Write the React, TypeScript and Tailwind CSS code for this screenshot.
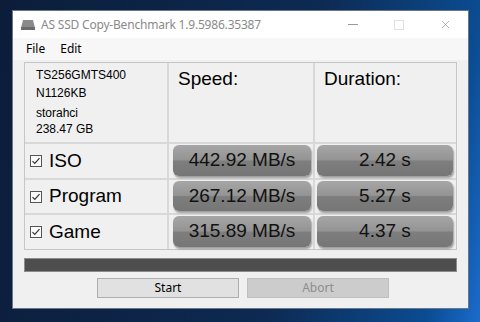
import { X } from 'lucide-react';

const rows = [
  { name: 'ISO', speed: '442.92 MB/s', time: '2.42 s' },
  { name: 'Program', speed: '267.12 MB/s', time: '5.27 s' },
  { name: 'Game', speed: '315.89 MB/s', time: '4.37 s' },
];

function CheckBox() {
  return (
    <svg width="12" height="12" viewBox="0 0 12 12" className="shrink-0">
      <rect x="0.5" y="0.5" width="11" height="11" fill="#fafafa" stroke="#555" />
      <path d="M2.5 6.2 L4.8 8.5 L9.5 3.2" fill="none" stroke="#333" strokeWidth="1.2" />
    </svg>
  );
}

function ValueBox({ children }: { children: React.ReactNode }) {
  return (
    <div className="h-full w-full rounded-[6px] bg-[linear-gradient(to_bottom,#a6a6a6_0%,#949494_48%,#7e7e7e_52%,#767676_100%)] shadow-[1px_2px_2px_rgba(0,0,0,0.35)] flex items-center justify-center text-[19px] text-[#111]">
      {children}
    </div>
  );
}

function DriveIcon() {
  return (
    <svg width="16" height="12" viewBox="0 0 16 12">
      <path d="M3 1 H13 L15 9 H1 Z" fill="#8a8a8a" />
      <rect x="1" y="8" width="14" height="3" fill="#6a6a6a" />
    </svg>
  );
}

export default function App() {
  return (
    <div className="w-[480px] h-[322px] overflow-hidden bg-[linear-gradient(100deg,#0c1d3a_0%,#0d2a52_60%,#0b4c92_90%,#1a6ccc_100%)] pl-[12px] pt-[10px] font-['Liberation_Sans',Arial,sans-serif]">
      <div className="w-[457px] h-[299px] border border-[#6b7686] bg-[#f0f0f0] flex flex-col">
        {/* Title bar */}
        <div className="h-[27px] bg-white flex items-center pl-[7px] font-['Noto_Sans',sans-serif] text-[12px] text-[#8a8a8a]">
          <DriveIcon />
          <span className="ml-[5px] tracking-[-0.2px]">AS SSD Copy-Benchmark 1.9.5986.35387</span>
          <div className="ml-auto flex items-center h-full">
            <div className="w-[46px] flex justify-center">
              <div className="w-[10px] h-px bg-[#9a9a9a]" />
            </div>
            <div className="w-[46px] flex justify-center">
              <div className="w-[10px] h-[10px] border border-[#e0e0e0]" />
            </div>
            <div className="w-[46px] flex justify-center text-[#8a8a8a]">
              <X size={13} strokeWidth={1.2} />
            </div>
          </div>
        </div>

        {/* Menu */}
        <div className="h-[22px] bg-[#f7f7f7] flex items-center gap-[15px] pl-[13px] font-['Noto_Sans',sans-serif] text-[12px] text-black">
          <span>File</span>
          <span>Edit</span>
        </div>

        <div className="px-[11px] pt-[2px]">
          {/* Results table */}
          <div className="grid grid-cols-[142px_144px_141px] grid-rows-[79px_34px_33px_34px] gap-[2px] border border-[#c6c6c6] bg-[#d8d8d8] text-black">
            <div className="bg-[#f0f0f0] pl-[11px] pt-[5px] text-[12px] leading-[14px]">
              <div>TS256GMTS400</div>
              <div className="mt-[4px]">N1126KB</div>
              <div className="mt-[6px]">storahci</div>
              <div className="mt-[2px]">238.47 GB</div>
            </div>
            <div className="bg-[#f0f0f0] pl-[9px] pt-[2px] text-[19px]">Speed:</div>
            <div className="bg-[#f0f0f0] pl-[9px] pt-[2px] text-[19px]">Duration:</div>

            {rows.map((r) => (
              <div key={r.name} className="contents">
                <div className="bg-[#f0f0f0] flex items-center gap-[7px] pl-[5px] text-[19px]">
                  <CheckBox />
                  <span>{r.name}</span>
                </div>
                <div className="bg-[#f0f0f0] pl-[4px] pr-[2px] pt-[1px] pb-[2px]">
                  <ValueBox>{r.speed}</ValueBox>
                </div>
                <div className="bg-[#f0f0f0] pl-[2px] pr-[3px] pt-[1px] pb-[2px]">
                  <ValueBox>{r.time}</ValueBox>
                </div>
              </div>
            ))}
          </div>

          {/* Progress bar */}
          <div className="mt-[8px] h-[14px] border border-[#8c8c8c] bg-[#4e4e4e]" />

          {/* Buttons */}
          <div className="mt-[6px] flex pl-[73px] gap-[8px] font-['Noto_Sans',sans-serif] text-[12px]">
            <div className="w-[142px] h-[20px] border border-[#adadad] bg-[#e1e1e1] flex items-center justify-center text-black">
              Start
            </div>
            <div className="w-[142px] h-[20px] border border-[#bfbfbf] bg-[#cccccc] flex items-center justify-center text-[#8d8d8d]">
              Abort
            </div>
          </div>
        </div>
      </div>
    </div>
  );
}
